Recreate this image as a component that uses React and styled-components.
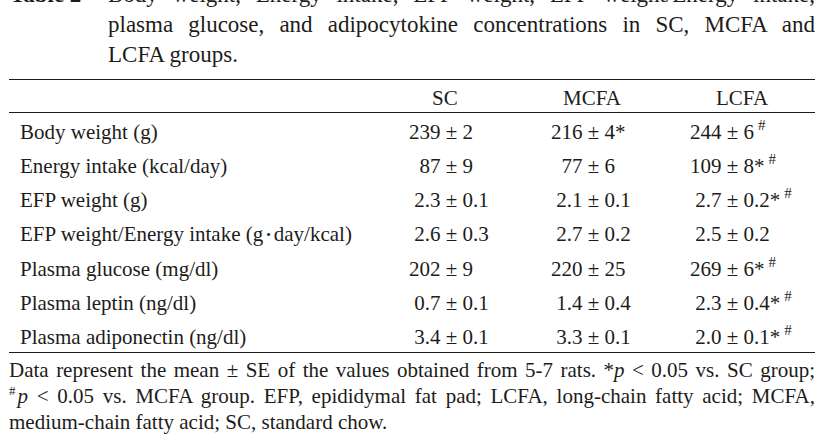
import React from "react";
import styled, { createGlobalStyle } from "styled-components";

const GlobalStyle = createGlobalStyle`
  html, body {
    margin: 0;
    padding: 0;
    background: #fff;
  }
  body {
    font-family: "Liberation Serif", "Times New Roman", serif;
    color: #1d1c1a;
    overflow: hidden;
  }
`;

const Page = styled.div`
  width: 806px;
  padding: 0 21px 0 9px;
`;

const Caption = styled.div`
  display: flex;
  margin-top: -20px;
  font-size: 23px;
  line-height: 30px;
`;

const CaptionLabel = styled.div`
  width: 98px;
  padding-left: 1px;
  font-weight: bold;
  flex: none;
`;

const CaptionBody = styled.div`
  flex: 1;
`;

const Line = styled.div`
  text-align: justify;
  text-align-last: ${(p) => (p.$last ? "left" : "justify")};
  white-space: nowrap;
`;

const Table = styled.div`
  margin-top: 9px;
  border-top: 1px solid #1d1c1a;
  border-bottom: 1px solid #1d1c1a;
  font-size: 21px;
  line-height: 20px;
`;

const Row = styled.div`
  display: grid;
  grid-template-columns: 400px 142px 139px 1fr;
  box-sizing: border-box;
  height: ${(p) => (p.$head ? "33px" : "34.2px")};
  padding-top: ${(p) => (p.$head ? "7.9px" : "8.9px")};
  border-bottom: ${(p) => (p.$head ? "1px solid #1d1c1a" : "none")};
  white-space: nowrap;
`;

const Label = styled.div`
  padding-left: 11px;
`;

const Head = styled.div`
  padding-left: ${(p) => p.$indent}px;
`;

const Value = styled.div`
  display: flex;
`;

const Lead = styled.span`
  width: 31.5px;
  text-align: right;
  flex: none;
`;

const Sup = styled.sup`
  font-size: 15px;
  line-height: 0;
  margin-left: 4px;
  vertical-align: 9px;
`;

const Dot = styled.span`
  font-size: 13px;
  margin: 0 3px;
  vertical-align: 2px;
`;

const Notes = styled.div`
  padding-top: 3.5px;
  font-size: 21px;
  line-height: 26px;
`;

const NoteSup = styled.sup`
  font-size: 13px;
  line-height: 0;
  vertical-align: 8px;
  margin-right: 2px;
`;

const headers = [
  { text: "SC", indent: 23 },
  { text: "MCFA", indent: 12 },
  { text: "LCFA", indent: 26 },
];

const rows = [
  {
    label: "Body weight (g)",
    values: [["239", "2"], ["216", "4*"], ["244", "6", true]],
  },
  {
    label: "Energy intake (kcal/day)",
    values: [["87", "9"], ["77", "6"], ["109", "8*", true]],
  },
  {
    label: "EFP weight (g)",
    values: [["2.3", "0.1"], ["2.1", "0.1"], ["2.7", "0.2*", true]],
  },
  {
    label: (
      <>
        EFP weight/Energy intake (g<Dot>•</Dot>day/kcal)
      </>
    ),
    values: [["2.6", "0.3"], ["2.7", "0.2"], ["2.5", "0.2"]],
  },
  {
    label: "Plasma glucose (mg/dl)",
    values: [["202", "9"], ["220", "25"], ["269", "6*", true]],
  },
  {
    label: "Plasma leptin (ng/dl)",
    values: [["0.7", "0.1"], ["1.4", "0.4"], ["2.3", "0.4*", true]],
  },
  {
    label: "Plasma adiponectin (ng/dl)",
    values: [["3.4", "0.1"], ["3.3", "0.1"], ["2.0", "0.1*", true]],
  },
];

const App = () => {
  return (
    <Page>
      <GlobalStyle />
      <Caption>
        <CaptionLabel>Table 2</CaptionLabel>
        <CaptionBody>
          <Line>Body weight, Energy intake, EFP weight, EFP weight/Energy intake,</Line>
          <Line>plasma glucose, and adipocytokine concentrations in SC, MCFA and</Line>
          <Line $last>LCFA groups.</Line>
        </CaptionBody>
      </Caption>
      <Table>
        <Row $head>
          <div />
          {headers.map((h) => (
            <Head key={h.text} $indent={h.indent}>
              {h.text}
            </Head>
          ))}
        </Row>
        {rows.map((r, i) => (
          <Row key={i}>
            <Label>{r.label}</Label>
            {r.values.map(([lead, rest, mark], j) => (
              <Value key={j}>
                <Lead>{lead}</Lead>
                <span>
                  &nbsp;±&nbsp;{rest}
                  {mark && <Sup>#</Sup>}
                </span>
              </Value>
            ))}
          </Row>
        ))}
      </Table>
      <Notes>
        <Line>
          Data represent the mean ± SE of the values obtained from 5-7 rats. *<i>p</i> &lt; 0.05 vs. SC group;
        </Line>
        <Line>
          <NoteSup>#</NoteSup>
          <i>p</i> &lt; 0.05 vs. MCFA group. EFP, epididymal fat pad; LCFA, long-chain fatty acid; MCFA,
        </Line>
        <Line $last>medium-chain fatty acid; SC, standard chow.</Line>
      </Notes>
    </Page>
  );
};

export default App;
